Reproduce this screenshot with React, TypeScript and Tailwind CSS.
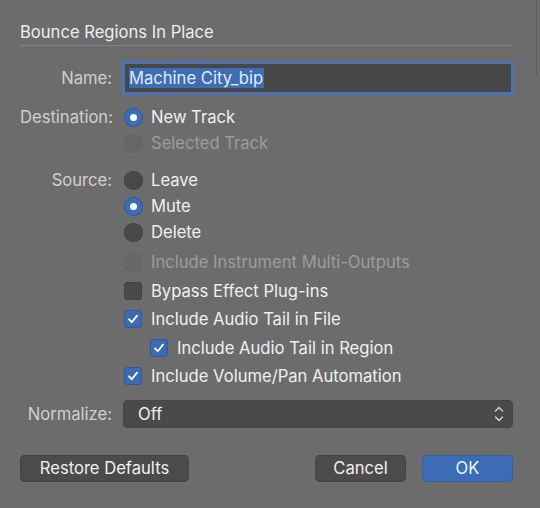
import React from "react";

const font = { fontFamily: "Inter, 'Liberation Sans', sans-serif" };

function Radio({ on, disabled }: { on?: boolean; disabled?: boolean }) {
  if (on) {
    return (
      <span className="flex h-[19px] w-[19px] shrink-0 items-center justify-center rounded-full bg-[#3d6db3] shadow-[inset_0_0_0_1px_#33599a]">
        <span className="h-[7px] w-[7px] rounded-full bg-white" />
      </span>
    );
  }
  return (
    <span
      className={`h-[19px] w-[19px] shrink-0 rounded-full ${
        disabled ? "bg-[#666666]" : "bg-[#484848] shadow-[inset_0_0_0_1px_#444]"
      }`}
    />
  );
}

function Check({ on, disabled }: { on?: boolean; disabled?: boolean }) {
  if (on) {
    return (
      <span className="flex h-[18px] w-[18px] shrink-0 items-center justify-center rounded-[4px] bg-[#3d6bb0] shadow-[inset_0_0_0_1px_#33599a]">
        <svg width="12" height="12" viewBox="0 0 12 12" fill="none">
          <path d="M2 6.3 L4.8 9.2 L10 2.6" stroke="white" strokeWidth="1.8" strokeLinecap="round" strokeLinejoin="round" />
        </svg>
      </span>
    );
  }
  return (
    <span
      className={`h-[18px] w-[18px] shrink-0 rounded-[4px] ${
        disabled ? "bg-[#676767]" : "bg-[#4a4a4a] shadow-[inset_0_0_0_1px_#444]"
      }`}
    />
  );
}

function Label({ children }: { children: React.ReactNode }) {
  return <div className="pr-[1px] text-right text-[#d0d0d0]">{children}</div>;
}

function Row({
  label,
  h,
  children,
}: {
  label?: string;
  h: string;
  children: React.ReactNode;
}) {
  return (
    <div className={`grid grid-cols-[93px_1fr] items-center gap-x-[11px] ${h}`}>
      <Label>{label ?? ""}</Label>
      <div className="flex items-center">{children}</div>
    </div>
  );
}

export default function App() {
  return (
    <div
      style={font}
      className="relative h-[508px] w-[540px] overflow-hidden bg-[#6c6c6c] pl-[20px] pr-[27px] text-[16.6px] leading-[20px] text-[#f0f0f0]"
    >
      <div className="absolute right-[3px] top-0 h-[76px] w-[1px] bg-[#5e5e5e]" />

      <div className="border-b border-[#838383] pb-[3px] pt-[22px] text-[#eeeeee]">
        Bounce Regions In Place
      </div>

      <div className="mt-[18px] grid grid-cols-[93px_1fr] items-center gap-x-[11px]">
        <Label>Name:</Label>
        <div className="ml-[1px] mr-[2px] flex h-[28px] items-center bg-[#474747] pl-[4px] shadow-[0_0_0_3px_#4e73b5]">
          <span className="bg-[#3f6db2] pr-[1px] text-[#dfeaff]">Machine City_bip</span>
        </div>
      </div>

      <div className="mt-[12px]">
        <Row label="Destination:" h="h-[26px]">
          <Radio on />
          <span className="ml-[8px]">New Track</span>
        </Row>
        <Row h="h-[26px]">
          <Radio disabled />
          <span className="ml-[8px] text-[#9c9c9c]">Selected Track</span>
        </Row>
      </div>

      <div className="mt-[11px]">
        <Row label="Source:" h="h-[26px]">
          <Radio />
          <span className="ml-[8px]">Leave</span>
        </Row>
        <Row h="h-[26px]">
          <Radio on />
          <span className="ml-[8px]">Mute</span>
        </Row>
        <Row h="h-[26px]">
          <Radio />
          <span className="ml-[8px]">Delete</span>
        </Row>
      </div>

      <div className="mt-[3px]">
        <Row h="h-[28.5px]">
          <Check disabled />
          <span className="ml-[9px] text-[#9c9c9c]">Include Instrument Multi-Outputs</span>
        </Row>
        <Row h="h-[28.5px]">
          <Check />
          <span className="ml-[9px]">Bypass Effect Plug-ins</span>
        </Row>
        <Row h="h-[28.5px]">
          <Check on />
          <span className="ml-[9px]">Include Audio Tail in File</span>
        </Row>
        <Row h="h-[28.5px]">
          <span className="ml-[26px]" />
          <Check on />
          <span className="ml-[9px]">Include Audio Tail in Region</span>
        </Row>
        <Row h="h-[28.5px]">
          <Check on />
          <span className="ml-[9px]">Include Volume/Pan Automation</span>
        </Row>
      </div>

      <div className="mt-[9px] grid grid-cols-[93px_1fr] items-center gap-x-[10px]">
        <Label>Normalize:</Label>
        <div className="flex h-[28px] items-center justify-between rounded-[5px] bg-[#4a4a4a] pl-[15px] pr-[9px] shadow-[inset_0_0_0_1px_#454545]">
          <span>Off</span>
          <svg width="10" height="18" viewBox="0 0 10 18" fill="none">
            <path d="M1.5 6 L5 2.5 L8.5 6" stroke="#d8d8d8" strokeWidth="1.3" strokeLinecap="round" strokeLinejoin="round" />
            <path d="M1.5 12 L5 15.5 L8.5 12" stroke="#d8d8d8" strokeWidth="1.3" strokeLinecap="round" strokeLinejoin="round" />
          </svg>
        </div>
      </div>

      <div className="mt-[27px] flex items-center">
        <button className="h-[27px] w-[169px] rounded-[5px] bg-[#4b4b4b] text-[#f0f0f0] shadow-[inset_0_0_0_1px_#444]">
          Restore Defaults
        </button>
        <div className="flex-1" />
        <button className="h-[27px] w-[91px] rounded-[5px] bg-[#4b4b4b] text-[#f0f0f0] shadow-[inset_0_0_0_1px_#444]">
          Cancel
        </button>
        <button className="ml-[16px] h-[27px] w-[91px] rounded-[5px] bg-[#3c6cb3] text-[#eef4ff] shadow-[inset_0_0_0_1px_#365f9f]">
          OK
        </button>
      </div>
    </div>
  );
}
